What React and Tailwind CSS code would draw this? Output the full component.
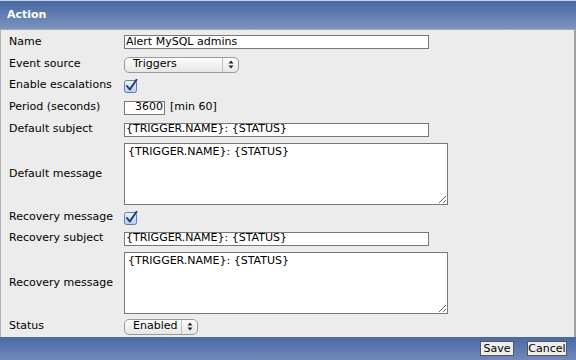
import React from 'react'

const font = { fontFamily: '"DejaVu Sans", Verdana, sans-serif' }

const Check = ({ id }) => (
  <svg width="14" height="14" viewBox="0 0 14 14" className="block shrink-0">
    <defs>
      <linearGradient id={id} x1="0" y1="0" x2="0" y2="1">
        <stop offset="0" stopColor="#eef4fc" />
        <stop offset="1" stopColor="#b9cde7" />
      </linearGradient>
    </defs>
    <rect x="0.5" y="1.5" width="12" height="12" rx="2" fill={`url(#${id})`} stroke="#5d7fae" />
    <path d="M3 7 L5.8 10.5 L12.5 0.8" fill="none" stroke="#1d3d78" strokeWidth="2" strokeLinecap="round" strokeLinejoin="round" />
  </svg>
)

const Arrows = () => (
  <svg width="6" height="9" viewBox="0 0 6 9">
    <path d="M0.5 3.5 L3 0.5 L5.5 3.5Z M0.5 5.5 L3 8.5 L5.5 5.5Z" fill="#222" />
  </svg>
)

const Select = ({ label, width }) => (
  <div
    className="flex items-center h-[16px] rounded-[5px] border border-[#9a9a9a] bg-gradient-to-b from-[#fdfdfd] to-[#e6e6e6] text-[11px] text-black"
    style={{ width }}
  >
    <span className="flex-1 pl-[8px]">{label}</span>
    <span className="flex items-center justify-center w-[16px] h-full border-l border-[#c0c0c0]">
      <Arrows />
    </span>
  </div>
)

const TextInput = ({ value, w = 'w-[305px]' }) => (
  <input
    readOnly
    value={value}
    className={`${w} h-[14px] border border-[#777] bg-white px-[1px] text-[11px] text-black outline-none`}
    style={font}
  />
)

const Area = ({ value }) => (
  <textarea
    readOnly
    value={value}
    className="w-[324px] h-[62px] border border-[#777] bg-white px-[3px] py-[1px] text-[11px] leading-[14px] text-black outline-none"
    style={font}
  />
)

const Row = ({ h, label, children }) => (
  <div className={`flex items-center ${h}`}>
    <div className="w-[123px] pl-[8px] shrink-0 whitespace-nowrap">{label}</div>
    {children}
  </div>
)

export default function App() {
  return (
    <div className="w-[576px] h-[360px] flex flex-col bg-[#ececec] text-[11px] text-black overflow-hidden" style={font}>
      <div className="h-[30px] shrink-0 border-t border-[#c8d0dd] border-b border-b-[#a8a8a8] bg-gradient-to-b from-[#4868a4] to-[#7b93bf] flex items-center pl-[7px] text-white font-bold">
        Action
      </div>
      <div className="flex-1 flex flex-col border-l-2 border-l-[#b0b0b0] border-r-2 border-r-[#a0a0a0] -ml-[1px]">
        <Row h="h-[24px]" label="Name"><TextInput value="Alert MySQL admins" /></Row>
        <Row h="h-[21px]" label="Event source"><Select label="Triggers" width={115} /></Row>
        <Row h="h-[21px]" label="Enable escalations"><Check id="cb1" /></Row>
        <Row h="h-[23px]" label="Period (seconds)">
          <TextInput value="3600" w="w-[41px] text-right" />
          <span className="ml-[5px]">[min 60]</span>
        </Row>
        <Row h="h-[21px]" label="Default subject"><TextInput value="{TRIGGER.NAME}: {STATUS}" /></Row>
        <Row h="h-[68px]" label="Default message"><Area value="{TRIGGER.NAME}: {STATUS}" /></Row>
        <Row h="h-[19px]" label="Recovery message"><Check id="cb2" /></Row>
        <Row h="h-[23px]" label="Recovery subject"><TextInput value="{TRIGGER.NAME}: {STATUS}" /></Row>
        <Row h="h-[66px]" label="Recovery message"><Area value="{TRIGGER.NAME}: {STATUS}" /></Row>
        <Row h="h-[21px]" label="Status"><Select label="Enabled" width={74} /></Row>
      </div>
      <div className="h-[23px] shrink-0 bg-gradient-to-b from-[#4a69a5] to-[#7189b9] flex items-center justify-end gap-[13px] pr-[9px]">
        <button className="w-[34px] h-[15px] bg-[#ededed] border border-[#555] text-[11px] leading-none text-black" style={font}>Save</button>
        <button className="w-[40px] h-[15px] bg-[#ededed] border border-[#555] text-[11px] leading-none text-black" style={font}>Cancel</button>
      </div>
    </div>
  )
}
